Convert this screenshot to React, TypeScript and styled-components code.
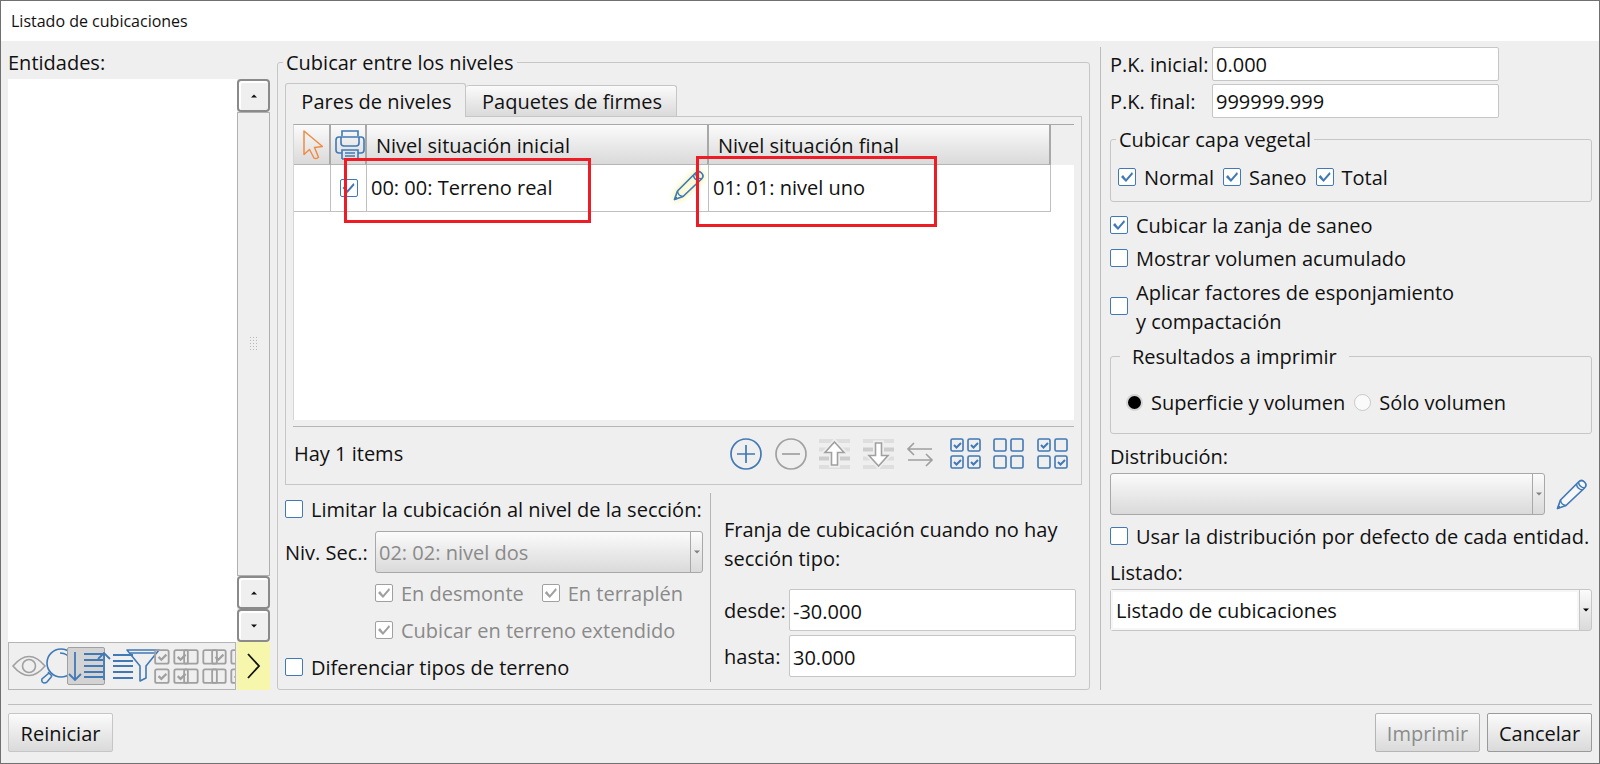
import React from "react";
import styled, { createGlobalStyle, css } from "styled-components";

const BLUE = "#4079b6";
const GREY = "#a0a0a0";
const FACE = "#efefef";
const LINE = "#c6c6c6";

const GlobalStyle = createGlobalStyle`
  * { box-sizing: border-box; }
  body {
    margin: 0;
    background: ${FACE};
    color: #111;
    font-family: "Open Sans", "Noto Sans", sans-serif;
    font-size: 20px;
    line-height: 28px;
  }
  button, input, select { font: inherit; color: inherit; }
`;

const raised = css`
  background: linear-gradient(#fbfbfb, #eaeaea 50%, #dadada);
`;

const Window = styled.div`
  display: flex;
  flex-direction: column;
  min-height: 100vh;
  border: 1px solid #707070;
  background: ${FACE};
`;

const TitleBar = styled.h1`
  flex: none;
  margin: 0;
  padding: 5px 10px;
  height: 40px;
  background: #fff;
  font-size: 16px;
  font-weight: 400;
  line-height: 30px;
`;

const Body = styled.main`
  flex: 1;
  display: grid;
  grid-template-columns: 262px minmax(0, 1fr) 492px;
  column-gap: 7px;
  padding: 6px 7px 0;
`;

const Footer = styled.footer`
  display: flex;
  gap: 7px;
  margin: 14px 7px 0;
  padding: 8px 0 11px;
  border-top: 1px solid #bdbdbd;
`;

const PushButton = styled.button<{ $strong?: boolean; $push?: boolean }>`
  width: 105px;
  height: 39px;
  padding: 2px 0 0;
  border: 1px solid ${(p) => (p.$strong ? "#9a9a9a" : LINE)};
  border-radius: 2px;
  margin-left: ${(p) => (p.$push ? "auto" : "0")};
  ${raised}
  &:disabled { color: #8c8c8c; border-color: #b5b5b5; }
`;

/* Entity list */

const Entities = styled.section`
  display: flex;
  flex-direction: column;
  padding-top: 2px;
`;

const Caption = styled.label`
  display: block;
`;

const ListRow = styled.div`
  flex: 1;
  display: flex;
  margin-top: 2px;
`;

const ListArea = styled.div`
  flex: 1;
  background: #fff;
`;

const ScrollBar = styled.div`
  display: flex;
  flex-direction: column;
  width: 33px;
`;

const ScrollTrack = styled.div`
  flex: 1;
  display: flex;
  align-items: center;
  justify-content: center;
  border: 1px solid #b0b0b0;
  background: ${FACE};
`;

const ScrollButton = styled.button`
  display: flex;
  align-items: center;
  justify-content: center;
  width: 33px;
  height: 33px;
  padding: 0;
  border: 2px solid #8a8a8a;
  border-radius: 4px;
  background: ${FACE};
  box-shadow: inset 2px 2px 0 #fff;
`;

const ListTools = styled.div`
  display: flex;
  height: 48px;
`;

const ToolClip = styled.div`
  flex: 1;
  overflow: hidden;
  border: 1px solid #b5b5b5;
  margin-right: 1px;
`;

const ToolStrip = styled.div`
  display: flex;
  align-items: center;
  width: 228px;
  height: 46px;
  margin-left: 6px;
`;

const ToolButton = styled.button<{ $pressed?: boolean }>`
  flex: 1 1 0;
  min-width: 0;
  display: flex;
  justify-content: center;
  padding: 0;
  border: 0;
  background: none;
  span {
    flex: none;
    display: flex;
    align-items: center;
    justify-content: center;
    width: 38px;
    height: 38px;
    border: 1px solid ${(p) => (p.$pressed ? "#a0a0a0" : "transparent")};
    border-radius: 2px;
    background: ${(p) => (p.$pressed ? "#d3d3d3" : "none")};
  }
`;

const MoreButton = styled.button`
  display: flex;
  align-items: center;
  justify-content: center;
  width: 33px;
  padding: 0;
  border: 0;
  background: #f6f6ac;
`;

/* Group boxes */

const Group = styled.fieldset<{ $pad: string; $top?: number }>`
  min-width: 0;
  margin: ${(p) => p.$top ?? 0}px 0 0;
  padding: ${(p) => p.$pad};
  border: 1px solid ${LINE};
  border-radius: 3px;
`;

const MainGroup = styled(Group)`
  display: flex;
  flex-direction: column;
  margin-right: 3px;
`;

const GroupTitle = styled.legend<{ $wide?: boolean }>`
  margin-left: ${(p) => (p.$wide ? "-6px" : "-2px")};
  padding: 2px ${(p) => (p.$wide ? 12 : 3)}px 0;
  line-height: 28px;
`;

const Tabs = styled.div`
  display: flex;
  align-items: flex-end;
`;

const Tab = styled.button<{ $active?: boolean }>`
  height: ${(p) => (p.$active ? 34 : 31)}px;
  width: ${(p) => (p.$active ? 181 : 211)}px;
  padding: 2px 0 0 2px;
  border: 1px solid ${LINE};
  border-radius: 3px 3px 0 0;
  ${(p) =>
    p.$active
      ? css`
          position: relative;
          margin-bottom: -1px;
          border-bottom: 0;
          background: ${FACE};
        `
      : css`
          border-left: 0;
          border-bottom: 0;
          ${raised}
        `}
`;

const TabPane = styled.div`
  flex: 1;
  display: flex;
  flex-direction: column;
  padding: 7px 7px 0;
  border: 1px solid ${LINE};
`;

const TableBox = styled.div`
  position: relative;
  flex: 1;
  padding-right: 23px;
  background: linear-gradient(${FACE}, ${FACE}) top / 100% 40px no-repeat #fff;
  border-top: 1px solid #a8a8a8;
  border-left: 1px solid #d5d5d5;
`;

const Levels = styled.table`
  width: 100%;
  table-layout: fixed;
  border-collapse: separate;
  border-spacing: 0;
  th {
    height: 40px;
    padding: 2px 0 0 9px;
    text-align: left;
    font-weight: 400;
    border-right: 2px solid #a8a8a8;
    border-bottom: 1px solid #b5b5b5;
    ${raised}
  }
  th:nth-child(-n + 2), td:nth-child(-n + 2) { padding: 0; text-align: center; }
  th:nth-child(-n + 2) { padding-left: 3px; }
  th svg, td > input { display: block; margin: 0 auto; }
  td {
    height: 47px;
    padding: 0 4px;
    background: #fff;
    border-right: 1px solid #c0c0c0;
    border-bottom: 1px solid #c0c0c0;
  }
`;

const Cell = styled.div`
  display: flex;
  align-items: center;
  justify-content: space-between;
  button { padding: 0; border: 0; background: none; display: flex; margin-top: -6px; }
  svg { filter: drop-shadow(0 0 3px #e9e96a); }
`;

const Highlight = styled.div<{ $left: string; $top: number; $w: number; $h: number }>`
  position: absolute;
  left: ${(p) => p.$left};
  top: ${(p) => p.$top}px;
  width: ${(p) => p.$w}px;
  height: ${(p) => p.$h}px;
  border: 3px solid #ee1c25;
  pointer-events: none;
`;

const TableFooter = styled.div`
  display: flex;
  align-items: center;
  justify-content: space-between;
  height: 58px;
  margin-top: 6px;
  border-top: 1px solid #b5b5b5;
  padding: 0 6px 3px 1px;
`;

const Actions = styled.div`
  display: flex;
  justify-content: space-between;
  width: 338px;
  button { display: flex; padding: 0; border: 0; background: none; }
`;

const Lower = styled.div`
  display: flex;
  margin-top: 8px;
`;

const Limits = styled.div`
  display: flex;
  flex-direction: column;
  width: 426px;
  padding: 3px 7px 0 0;
  border-right: 1px solid #b5b5b5;
`;

const Strip = styled.div`
  flex: 1;
  padding: 22px 6px 5px 13px;
`;

const Paragraph = styled.p`
  margin: 0 0 16px;
  line-height: 29px;
`;

/* Form parts */

const Line = styled.div<{ $top?: number; $indent?: number; $gap?: number }>`
  display: flex;
  align-items: center;
  gap: ${(p) => p.$gap ?? 0}px;
  margin-top: ${(p) => p.$top ?? 0}px;
  padding-left: ${(p) => p.$indent ?? 0}px;
`;

const FieldName = styled.label<{ $w: number }>`
  flex: none;
  width: ${(p) => p.$w}px;
  padding-top: 2px;
  white-space: nowrap;
`;

const TextBox = styled.input<{ $tall?: boolean; $w?: number }>`
  ${(p) => (p.$w ? `width: ${p.$w}px;` : "flex: 1; min-width: 0;")}
  height: ${(p) => (p.$tall ? 42 : 34)}px;
  padding: ${(p) => (p.$tall ? 2 : 0)}px 3px 0;
  border: 1px solid ${LINE};
  border-radius: 2px;
  background: #fff;
  outline: none;
`;

const Tick = styled.input.attrs({ type: "checkbox" })`
  appearance: none;
  flex: none;
  width: 18px;
  height: 18px;
  margin: 0 0 2px;
  border: 1px solid ${BLUE};
  border-radius: 2px;
  background: #fff;
  &:disabled { border-color: ${GREY}; }
  &:checked::before {
    content: "";
    display: block;
    width: 16px;
    height: 16px;
    background: ${BLUE};
    clip-path: polygon(2px 8px, 4px 6px, 7px 10px, 13px 3px, 14px 5px, 7px 13px);
  }
  &:disabled:checked::before { background: ${GREY}; }
`;

const Radio = styled.input.attrs({ type: "radio" })`
  appearance: none;
  flex: none;
  width: 17px;
  height: 17px;
  margin: 0 0 2px;
  border: 1px solid #c8c8c8;
  border-radius: 50%;
  background: #fafafa;
  &:checked { background: #000; border: 2px solid #d4d4d4; }
`;

const Option = styled.label<{ $top?: number; $off?: boolean; $tall?: boolean }>`
  display: flex;
  align-items: center;
  gap: 8px;
  margin-top: ${(p) => p.$top ?? 0}px;
  line-height: ${(p) => (p.$tall ? 29 : 28)}px;
  color: ${(p) => (p.$off ? "#8a8a8a" : "inherit")};
  white-space: nowrap;
`;

const Combo = styled.div<{ $white?: boolean; $off?: boolean }>`
  flex: 1;
  display: flex;
  height: 42px;
  border: 1px solid ${(p) => (p.$off ? "#a8a8a8" : LINE)};
  border-radius: 3px;
  ${raised}
  select {
    appearance: none;
    flex: 1;
    min-width: 0;
    padding: 2px 3px 0;
    border: ${(p) => (p.$white ? "2px solid #f6f6f6" : "0")};
    background: ${(p) => (p.$white ? "#fff" : "transparent")};
    outline: none;
  }
  select:disabled { color: #8a8a8a; opacity: 1; }
`;

const ComboArrow = styled.span<{ $off?: boolean }>`
  display: flex;
  align-items: center;
  justify-content: center;
  width: 12px;
  border-left: 1px solid ${(p) => (p.$off ? "#a8a8a8" : LINE)};
  color: ${(p) => (p.$off ? "#808080" : "#000")};
`;

const Settings = styled.section`
  padding-left: 9px;
  border-left: 1px solid #bcbcbc;
`;

const IconButton = styled.button`
  display: flex;
  width: 47px;
  padding: 0 0 0 11px;
  border: 0;
  background: none;
`;

/* Icons */

const Triangle = ({ down }: { down?: boolean }) => (
  <svg width="6" height="4" viewBox="0 0 6 4" fill="currentColor">
    <path d={down ? "M0 .5h6L3 3.5z" : "M0 3.5h6L3 .5z"} />
  </svg>
);

const Pencil = () => (
  <svg width="31" height="31" viewBox="0 0 31 31" fill="none" stroke={BLUE} strokeWidth="1.700" strokeLinejoin="round">
    <path d="M1.500 29.500 4.500 21 22.500 3q3-3 6 0t0 6L10 26.500z" fill="#fff" fillOpacity="0.5" />
    <path d="M4.500 21q.5 5 5.500 5.500M20.500 5q.5 5 6 6M22.500 3q.5 5 6 6" strokeWidth="1.500" />
    <path d="M1.500 29.500l1-3 2 2z" fill={BLUE} strokeWidth="1" />
  </svg>
);

const Cursor = () => (
  <svg width="20" height="30" viewBox="0 0 20 30" fill="none" stroke="#f08c46" strokeWidth="1.500" strokeLinejoin="round">
    <path d="M1 1v23.500l5.500-5 4.500 8.500q2 1.500 4.500-.8L11.500 17.500l8-1z" />
  </svg>
);

const Printer = () => (
  <svg width="30" height="30" viewBox="0 0 30 30" fill="none" stroke={BLUE} strokeWidth="1.600">
    <path d="M7 6V1h16v5M6 7h18v6q0 3-3 3H9q-3 0-3-3zM6 7H4Q1 7 1 10v10q0 3 3 3h3M24 7h2q3 0 3 3v10q0 3-3 3h-3" />
    <path d="M7 29V20h16v9M10 23h10M10 26h10M7 29h16" />
  </svg>
);

const Eye = () => (
  <svg width="34" height="24" viewBox="0 0 34 24" fill="none" stroke={GREY} strokeWidth="1.600">
    <path d="M1 12Q9 2.500 17 2.500T33 12Q25 21.500 17 21.500T1 12z" />
    <circle cx="17" cy="12" r="6.500" />
  </svg>
);

const Magnifier = () => (
  <svg width="36" height="36" viewBox="0 0 36 36" fill="none" stroke={BLUE} strokeWidth="1.600">
    <circle cx="21" cy="15" r="14" />
    <path d="M20 5q8 0 10 7M8 24l4 4M9 25l-7 6q-1 3 2 4 2 0 3-1l5-6" />
  </svg>
);

const SortDown = () => (
  <svg width="36" height="32" viewBox="0 0 36 32" fill="none" stroke={BLUE} strokeWidth="1.800">
    <path d="M7 2v28M1 24l6 6 6-6M16 4h19M16 10h19M16 16h19M16 22h19M16 27h19" />
  </svg>
);

const SortUp = () => (
  <svg width="36" height="32" viewBox="0 0 36 32" fill="none" stroke={BLUE} strokeWidth="1.800">
    <path d="M7 30V3M1 9l6-6 6 6M16 5h20M16 11h20M16 16h20M16 22h20M16 28h20" />
  </svg>
);

const Funnel = () => (
  <svg width="34" height="36" viewBox="0 0 34 36" fill="none" stroke={BLUE} strokeWidth="1.600" strokeLinejoin="round">
    <path d="M1 2h32L20 18v12l-6 3V18zM3 5h28" />
  </svg>
);

const CheckGrid = ({ checks, colour = BLUE, size = 31 }: { checks: number[]; colour?: string; size?: number }) => (
  <svg width={size} height={size} viewBox="0 0 31 31" fill="none" stroke={colour} strokeWidth="1.600">
    {[0, 1, 2, 3].map((i) => {
      const x = (i % 2) * 17 + 1;
      const y = Math.floor(i / 2) * 17 + 1;
      return (
        <g key={i}>
          <rect x={x} y={y} width="12" height="12" rx="1.500" />
          {checks.includes(i) && <path d={`M${x + 3} ${y + 6}l2.500 2.500 4.500-4.500`} strokeWidth="2" />}
        </g>
      );
    })}
  </svg>
);

const Circled = ({ plus }: { plus?: boolean }) => (
  <svg width="32" height="32" viewBox="0 0 32 32" fill="none" stroke={plus ? BLUE : GREY} strokeWidth="1.700">
    <circle cx="16" cy="16" r="15" />
    <path d={plus ? "M7 16h18M16 7v18" : "M7 16h18"} />
  </svg>
);

const MoveRow = ({ down }: { down?: boolean }) => (
  <svg width="31" height="32" viewBox="0 0 31 32">
    <g transform={down ? "rotate(180 15.5 16)" : undefined}>
      <path d="M0 3h31M0 11.500h31M0 29h31" stroke="#dedede" strokeWidth="4" />
      <path d="M0 20.500h31" stroke="#cdcdcd" strokeWidth="4" />
      <path d="M15.500 4 25 14.500h-6.500V27h-6V14.500H6z" fill="#fff" stroke={FACE} strokeWidth="5" />
      <path d="M15.500 4 25 14.500h-6.500V27h-6V14.500H6z" fill="#fff" stroke={GREY} strokeWidth="1.600" />
    </g>
  </svg>
);

const Swap = () => (
  <svg width="31" height="32" viewBox="2 0 31 32" fill="none" stroke={GREY} strokeWidth="1.700">
    <path d="M28 11H4M10 5l-6 6 6 6M4 22h24M22 16l6 6-6 6" />
  </svg>
);

const Grip = () => (
  <svg width="8" height="14" viewBox="0 0 8 14" fill="#b8b8b8">
    {[0, 3, 6, 9, 12].map((y) => (
      <path key={y} d={`M0 ${y}h1v1H0zM3 ${y}h1v1H3zM6 ${y}h1v1H6z`} />
    ))}
  </svg>
);

const listTools = [
  { label: "Ver", icon: <Eye /> },
  { label: "Buscar", icon: <Magnifier /> },
  { label: "Orden descendente", icon: <SortDown />, pressed: true },
  { label: "Orden ascendente", icon: <SortUp /> },
  { label: "Filtrar", icon: <Funnel /> },
  { label: "Marcar todo", icon: <CheckGrid checks={[0, 1, 2, 3]} colour={GREY} size={35} /> },
  { label: "Desmarcar todo", icon: <CheckGrid checks={[]} colour={GREY} size={35} /> },
  { label: "Invertir marcas", icon: <CheckGrid checks={[0, 3]} colour={GREY} size={35} /> },
];

const rowActions = [
  { label: "Añadir", icon: <Circled plus /> },
  { label: "Quitar", icon: <Circled /> },
  { label: "Subir", icon: <MoveRow /> },
  { label: "Bajar", icon: <MoveRow down /> },
  { label: "Intercambiar", icon: <Swap /> },
  { label: "Marcar todos", icon: <CheckGrid checks={[0, 1, 2, 3]} /> },
  { label: "Desmarcar todos", icon: <CheckGrid checks={[]} /> },
  { label: "Invertir", icon: <CheckGrid checks={[0, 3]} /> },
];

export default function App() {
  return (
    <Window>
      <GlobalStyle />
      <TitleBar>Listado de cubicaciones</TitleBar>
      <Body>
        <Entities>
          <Caption as="span">Entidades:</Caption>
          <ListRow>
            <ListArea />
            <ScrollBar>
              <ScrollButton aria-label="Subir lista"><Triangle /></ScrollButton>
              <ScrollTrack><Grip /></ScrollTrack>
              <ScrollButton aria-label="Línea arriba"><Triangle /></ScrollButton>
              <ScrollButton aria-label="Línea abajo"><Triangle down /></ScrollButton>
            </ScrollBar>
          </ListRow>
          <ListTools>
            <ToolClip>
              <ToolStrip>
                {listTools.map((t) => (
                  <ToolButton key={t.label} aria-label={t.label} $pressed={t.pressed}>
                    <span>{t.icon}</span>
                  </ToolButton>
                ))}
              </ToolStrip>
            </ToolClip>
            <MoreButton aria-label="Más">
              <svg width="14" height="26" viewBox="0 0 14 26" fill="none" stroke="#111" strokeWidth="1.800">
                <path d="M1 1l11 12L1 25" />
              </svg>
            </MoreButton>
          </ListTools>
        </Entities>

        <MainGroup $pad="6px 7px 7px">
          <GroupTitle>Cubicar entre los niveles</GroupTitle>
          <Tabs role="tablist">
            <Tab role="tab" aria-selected="true" $active>Pares de niveles</Tab>
            <Tab role="tab" aria-selected="false">Paquetes de firmes</Tab>
          </Tabs>
          <TabPane>
            <TableBox>
              <Levels>
                <colgroup>
                  <col style={{ width: 37 }} />
                  <col style={{ width: 36 }} />
                  <col />
                  <col />
                </colgroup>
                <thead>
                  <tr>
                    <th><Cursor /></th>
                    <th><Printer /></th>
                    <th>Nivel situación inicial</th>
                    <th>Nivel situación final</th>
                  </tr>
                </thead>
                <tbody>
                  <tr>
                    <td />
                    <td><Tick defaultChecked aria-label="Imprimir par" /></td>
                    <td>
                      <Cell>
                        00: 00: Terreno real
                        <button aria-label="Editar nivel"><Pencil /></button>
                      </Cell>
                    </td>
                    <td>01: 01: nivel uno</td>
                  </tr>
                </tbody>
              </Levels>
              <Highlight $left="50px" $top={33} $w={247} $h={65} />
              <Highlight $left="calc(50% + 12px)" $top={31} $w={241} $h={71} />
            </TableBox>
            <TableFooter>
              Hay 1 items
              <Actions>
                {rowActions.map((a) => (
                  <button key={a.label} aria-label={a.label}>{a.icon}</button>
                ))}
              </Actions>
            </TableFooter>
          </TabPane>
          <Lower>
            <Limits>
              <Option><Tick />Limitar la cubicación al nivel de la sección:</Option>
              <Line $top={7}>
                <FieldName $w={90} htmlFor="nivel">Niv. Sec.:</FieldName>
                <Combo $off>
                  <select id="nivel" disabled><option>02: 02: nivel dos</option></select>
                  <ComboArrow $off><Triangle down /></ComboArrow>
                </Combo>
              </Line>
              <Line $top={7} $indent={90} $gap={18}>
                <Option $off><Tick defaultChecked disabled />En desmonte</Option>
                <Option $off><Tick defaultChecked disabled />En terraplén</Option>
              </Line>
              <Line $top={9} $indent={90}>
                <Option $off><Tick defaultChecked disabled />Cubicar en terreno extendido</Option>
              </Line>
              <Option $top={9}><Tick />Diferenciar tipos de terreno</Option>
            </Limits>
            <Strip>
              <Paragraph>Franja de cubicación cuando no hay<br />sección tipo:</Paragraph>
              <Line>
                <FieldName $w={65} htmlFor="desde">desde:</FieldName>
                <TextBox id="desde" $tall defaultValue="-30.000" />
              </Line>
              <Line $top={4}>
                <FieldName $w={65} htmlFor="hasta">hasta:</FieldName>
                <TextBox id="hasta" $tall defaultValue="30.000" />
              </Line>
            </Strip>
          </Lower>
        </MainGroup>

        <Settings>
          <Line>
            <FieldName $w={102} htmlFor="pk-inicial">P.K. inicial:</FieldName>
            <TextBox id="pk-inicial" $w={287} defaultValue="0.000" />
          </Line>
          <Line $top={3}>
            <FieldName $w={102} htmlFor="pk-final">P.K. final:</FieldName>
            <TextBox id="pk-final" $w={287} defaultValue="999999.999" />
          </Line>
          <Group $pad="10px 7px 9px" $top={6}>
            <GroupTitle>Cubicar capa vegetal</GroupTitle>
            <Line $gap={9}>
              <Option><Tick defaultChecked />Normal</Option>
              <Option><Tick defaultChecked />Saneo</Option>
              <Option><Tick defaultChecked />Total</Option>
            </Line>
          </Group>
          <Option $top={10}><Tick defaultChecked />Cubicar la zanja de saneo</Option>
          <Option $top={5}><Tick />Mostrar volumen acumulado</Option>
          <Option $top={5} $tall><Tick /><span>Aplicar factores de esponjamiento<br />y compactación</span></Option>
          <Group $pad="18px 15px 16px" $top={5}>
            <GroupTitle $wide>Resultados a imprimir</GroupTitle>
            <Line $gap={9}>
              <Option><Radio name="resultado" defaultChecked />Superficie y volumen</Option>
              <Option><Radio name="resultado" />Sólo volumen</Option>
            </Line>
          </Group>
          <Line $top={9}><Caption htmlFor="distribucion">Distribución:</Caption></Line>
          <Line $top={2}>
            <Combo $off>
              <select id="distribucion" disabled><option /></select>
              <ComboArrow $off><Triangle down /></ComboArrow>
            </Combo>
            <IconButton aria-label="Editar distribución"><Pencil /></IconButton>
          </Line>
          <Option $top={8}><Tick />Usar la distribución por defecto de cada entidad.</Option>
          <Line $top={8}><Caption htmlFor="listado">Listado:</Caption></Line>
          <Line $top={2}>
            <Combo $white>
              <select id="listado"><option>Listado de cubicaciones</option></select>
              <ComboArrow><Triangle down /></ComboArrow>
            </Combo>
          </Line>
        </Settings>
      </Body>
      <Footer>
        <PushButton>Reiniciar</PushButton>
        <PushButton $push disabled>Imprimir</PushButton>
        <PushButton $strong>Cancelar</PushButton>
      </Footer>
    </Window>
  );
}
